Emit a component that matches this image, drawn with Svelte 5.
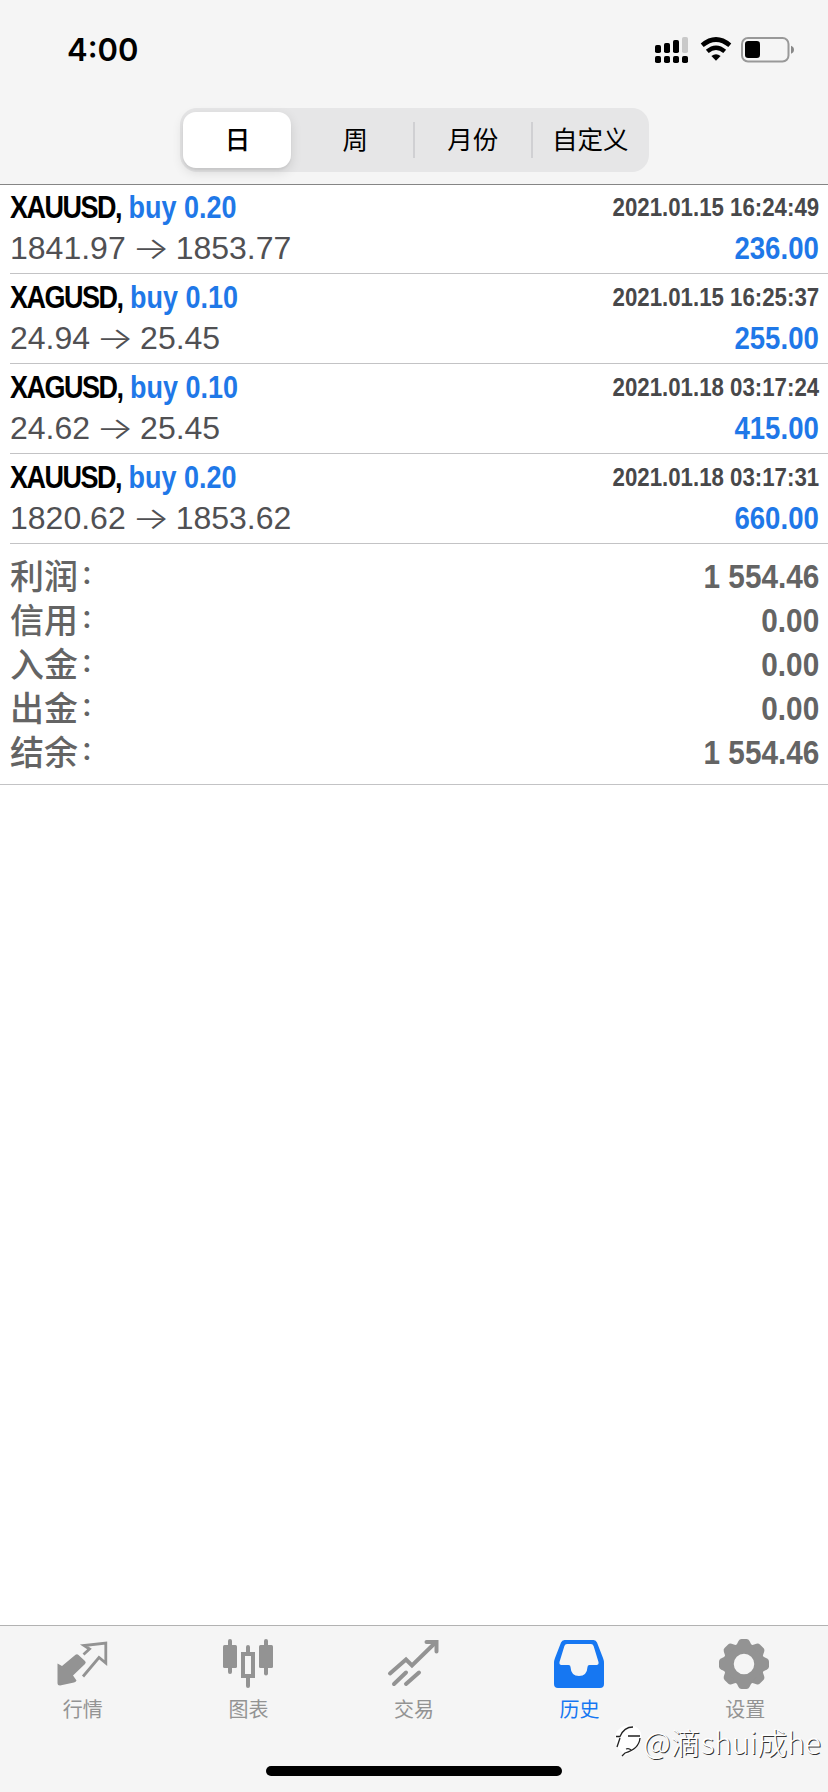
<script lang="ts">
  const periods = ['日', '周', '月份', '自定义'];
  let period = $state('日');

  const deals = [
    { symbol: 'XAUUSD', side: 'buy', volume: '0.20', open: '1841.97', close: '1853.77', time: '2021.01.15 16:24:49', profit: '236.00' },
    { symbol: 'XAGUSD', side: 'buy', volume: '0.10', open: '24.94', close: '25.45', time: '2021.01.15 16:25:37', profit: '255.00' },
    { symbol: 'XAGUSD', side: 'buy', volume: '0.10', open: '24.62', close: '25.45', time: '2021.01.18 03:17:24', profit: '415.00' },
    { symbol: 'XAUUSD', side: 'buy', volume: '0.20', open: '1820.62', close: '1853.62', time: '2021.01.18 03:17:31', profit: '660.00' }
  ];

  const totals = [
    { label: '利润', value: '1 554.46' },
    { label: '信用', value: '0.00' },
    { label: '入金', value: '0.00' },
    { label: '出金', value: '0.00' },
    { label: '结余', value: '1 554.46' }
  ];

  const tabs = [
    { id: 'quotes', label: '行情' },
    { id: 'chart', label: '图表' },
    { id: 'trade', label: '交易' },
    { id: 'history', label: '历史' },
    { id: 'settings', label: '设置' }
  ];
  let tab = $state('history');
</script>

<div class="screen">
  <header>
    <div class="status">
      <span class="clock">4:00</span>
      <div class="status-icons">
        <svg width="34" height="27" viewBox="0 0 34 27">
          <rect x="0" y="8" width="6" height="8" rx="1.8" />
          <rect x="9" y="6" width="6" height="10" rx="1.8" />
          <rect x="18" y="3" width="6" height="13" rx="1.8" />
          <rect x="27" y="0" width="6" height="16" rx="1.8" fill="#c9c9c9" />
          <rect x="0" y="19" width="6" height="7" rx="1.8" />
          <rect x="9" y="19" width="6" height="7" rx="1.8" />
          <rect x="18" y="19" width="6" height="7" rx="1.8" />
          <rect x="27" y="19" width="6" height="7" rx="1.8" />
        </svg>
        <svg class="wifi" width="32" height="25" viewBox="0 0 32 25">
          <path d="M2.2 8.3Q16 -3.3 29.8 8.3" fill="none" stroke="#000" stroke-width="4.6" />
          <path d="M7.3 14.4Q16 7 24.7 14.4" fill="none" stroke="#000" stroke-width="4.4" />
          <path d="M11.4 19Q16 15.3 20.6 19L16 23.8Z" />
        </svg>
        <svg width="54" height="26" viewBox="0 0 54 26">
          <rect x="1" y="1" width="46.5" height="23.5" rx="6" fill="none" stroke="#999" stroke-width="2" />
          <rect x="4" y="4" width="15" height="17" rx="3.2" />
          <path d="M50 8.8Q53 10 53 12.8Q53 15.6 50 16.8Z" fill="#888" />
        </svg>
      </div>
    </div>
    <div class="segmented">
      {#each periods as p}
        <button class:active={period === p} onclick={() => (period = p)}>{p}</button>
      {/each}
    </div>
  </header>

  <main>
    {#each deals as deal}
      <div class="deal">
        <div class="line">
          <span class="title"><span class="symbol">{deal.symbol},</span> <b>{deal.side} {deal.volume}</b></span>
          <span class="time">{deal.time}</span>
        </div>
        <div class="line">
          <span class="prices">{deal.open}<i>→</i>{deal.close}</span>
          <span class="profit">{deal.profit}</span>
        </div>
      </div>
    {/each}
    <div class="totals">
      {#each totals as row}
        <div class="total">
          <span class="label">{row.label}</span>
          <span class="colon">:</span>
          <span class="value">{row.value}</span>
        </div>
      {/each}
    </div>
  </main>

  <footer>
    <nav>
      {#each tabs as t}
        <button class:active={tab === t.id} onclick={() => (tab = t.id)}>
          <svg width="52" height="52" viewBox="0 0 52 52" fill="currentColor">
            {#if t.id === 'quotes'}
              <path d="M.5 23.500L5 26L18.500 14.800Q20 13.500 21.500 15L28 21Q29.500 22.500 28 24L16 35.500L19.500 40.500Q19 42 17 42.500L3 45.500Q.5 45.500 .5 43Z" />
              <path d="M26.500 14.500L32.500 9L27 5.500L48.800 3V23L42 17.500L26 36.500" fill="none" stroke="currentColor" stroke-width="2.8" />
            {:else if t.id === 'chart'}
              <rect x="1" y="5" width="14" height="23" rx="1.5" />
              <rect x="6" y="-1" width="4" height="35" rx="2" />
              <rect x="37" y="5" width="14" height="23" rx="1.5" />
              <rect x="42" y="-1" width="4" height="36.500" rx="2" />
              <rect x="21" y="14" width="10" height="22" fill="none" stroke="currentColor" stroke-width="4" />
              <path d="M26 7V13M26 38V46" stroke="currentColor" stroke-width="4" stroke-linecap="round" />
            {:else if t.id === 'trade'}
              <path d="M2 33.500L18 19.500L24 25.500L47 3" fill="none" stroke="currentColor" stroke-width="4" stroke-linecap="round" />
              <path d="M38.500 2H48.500V11.500" fill="none" stroke="currentColor" stroke-width="4" stroke-linecap="round" />
              <path d="M6 44L18 32.500M18 44L31 32.500" stroke="currentColor" stroke-width="4" stroke-linecap="round" />
            {:else if t.id === 'history'}
              <path transform="translate(-1 0)" fill-rule="evenodd" d="M11.500 0H40.500Q43 0 44 2.500L50 18Q51 20.500 51 23V44Q51 48 47 48H5Q1 48 1 44V23Q1 20.500 2 18L8 2.500Q9 0 11.500 0ZM14 4Q12 4 11.400 6L6.500 22Q6 25 8.500 25H15.500Q17.500 25 17.500 27Q18 36 26 36Q34 36 34.500 27Q34.500 25 36.500 25H43.500Q46 25 45.500 22L40.600 6Q40 4 38 4Z" />
            {:else}
              <circle cx="25" cy="24" r="15.500" fill="none" stroke="currentColor" stroke-width="10.500" />
              {#each [0, 45, 90, 135, 180, 225, 270, 315] as angle}
                <path d="M17 6L19.500 1Q20.500 -1 22.500 -1H27.500Q29.500 -1 30.500 1L33 6Z" transform="rotate({angle} 25 24)" />
              {/each}
            {/if}
          </svg>
          <span>{t.label}</span>
        </button>
      {/each}
    </nav>
    <div class="home"></div>
    <div class="watermark">
      <svg width="27" height="32" viewBox="0 0 27 32">
        <path d="M1 8Q7 -2 19 1Q28 5 26 14Q24 26 8 31L7 27Q-2 21 1 8Z" fill="#fff" />
        <path d="M1 11.500H5Q9 2 18 2M13 11H25M2 22L5 13M25 13Q24 24 10 28L7 31M11 24Q14 23 16 25" fill="none" stroke="#222" stroke-width="1.300" />
      </svg>
      <span>@滴shui成he</span>
    </div>
  </footer>
</div>

<style>
  :global(body) {
    margin: 0;
    background: #fff;
  }

  .screen {
    display: flex;
    flex-direction: column;
    width: 828px;
    height: 1792px;
    overflow: hidden;
    font-family: 'Liberation Sans', 'Noto Sans CJK SC', sans-serif;
  }

  button {
    border: 0;
    padding: 0;
    background: none;
    font-family: Inter, 'Noto Sans CJK SC', sans-serif;
  }

  header {
    box-sizing: border-box;
    height: 185px;
    background: #f5f5f5;
    border-bottom: 1px solid #858585;
  }

  .status {
    display: flex;
    justify-content: space-between;
    height: 108px;
    padding: 0 33px 0 67px;
  }

  .clock {
    margin-top: 30px;
    font: 600 31px/40px Inter, sans-serif;
  }

  .status-icons {
    display: flex;
    align-items: flex-start;
    margin-top: 37px;
  }

  .wifi {
    margin: 0 9px 0 11px;
  }

  .segmented {
    display: flex;
    box-sizing: border-box;
    width: 469px;
    height: 64px;
    margin: 0 auto;
    padding: 4px 0;
    border-radius: 17px;
    background: #e6e6e7;
  }

  .segmented button {
    position: relative;
    box-sizing: border-box;
    width: 117.5px;
    padding-left: 2px;
    font-size: 25.5px;
    line-height: 56px;
    color: #000;
  }

  .segmented button.active {
    width: 108px;
    margin: 0 5px 0 3px;
    border-radius: 13px;
    background: #fff;
    font-weight: 500;
    box-shadow: 0 4px 12px rgba(0, 0, 0, 0.12), 0 2px 2px rgba(0, 0, 0, 0.05);
  }

  .segmented button:nth-child(n + 3)::before {
    content: '';
    position: absolute;
    left: 0;
    top: 10px;
    width: 2px;
    height: 36px;
    background: #d0d0d3;
  }

  main {
    flex: 1;
  }

  .deal {
    box-sizing: border-box;
    height: 90px;
    margin-left: 10px;
    padding: 3px 9px 0 0;
    border-bottom: 1px solid #c3c3c5;
  }

  .deal:first-child {
    height: 89px;
    padding-top: 2px;
  }

  .line {
    display: flex;
    justify-content: space-between;
    height: 40px;
    line-height: 42px;
    white-space: nowrap;
  }

  /* condensed bold face, squeezed towards the edge the text sits on */
  .title,
  .time,
  .profit,
  .value {
    font-weight: 700;
    transform: scaleX(0.89);
    transform-origin: right;
  }

  .title {
    font-size: 31px;
    color: #000;
    transform: scaleX(0.87);
    transform-origin: left;
  }

  .symbol {
    letter-spacing: -1.7px;
  }

  .title b,
  .profit {
    color: #1f78e8;
  }

  .time {
    font-size: 25px;
    line-height: 40px;
    color: #48484a;
  }

  .prices {
    font-size: 32px;
    color: #505053;
  }

  .prices i {
    display: inline-block;
    width: 50px;
    font: 300 30px/30px Inter, sans-serif;
    text-align: center;
    transform: scaleX(1.32);
  }

  .profit {
    margin-top: 1px;
    font-size: 31px;
  }

  .totals {
    padding: 10px 9px 10px 10px;
    border-bottom: 1px solid #c3c3c5;
  }

  .total {
    display: flex;
    height: 44px;
    line-height: 44px;
    color: #646464;
  }

  .label {
    font: 500 34px/47px 'Liberation Sans', 'Noto Sans CJK SC', sans-serif;
  }

  .colon {
    margin-left: 4px;
    font: 500 32px/37px Inter, sans-serif;
  }

  .value {
    margin-left: auto;
    font-size: 34px;
    transform: scaleX(0.875);
  }

  footer {
    position: relative;
    box-sizing: border-box;
    height: 167px;
    background: #f5f5f5;
    border-top: 1px solid #b2b2b2;
  }

  nav {
    display: flex;
    padding-top: 14px;
  }

  nav button {
    display: flex;
    flex: 1;
    flex-direction: column;
    align-items: center;
    font-size: 20px;
    line-height: 28px;
    color: #939393;
  }

  nav svg {
    overflow: visible;
  }

  nav span {
    margin-top: 4px;
  }

  nav .active {
    color: #1677f2;
  }

  .home {
    position: absolute;
    left: 266px;
    bottom: 16px;
    width: 296px;
    height: 10px;
    border-radius: 5px;
    background: #000;
  }

  .watermark {
    position: absolute;
    right: 7px;
    top: 93px;
    display: flex;
    align-items: center;
    gap: 1px;
    color: #fff;
    font: 300 30px/44px 'Noto Sans CJK SC', sans-serif;
    text-shadow: 1px 1px 0 #333;
    white-space: nowrap;
  }
</style>
